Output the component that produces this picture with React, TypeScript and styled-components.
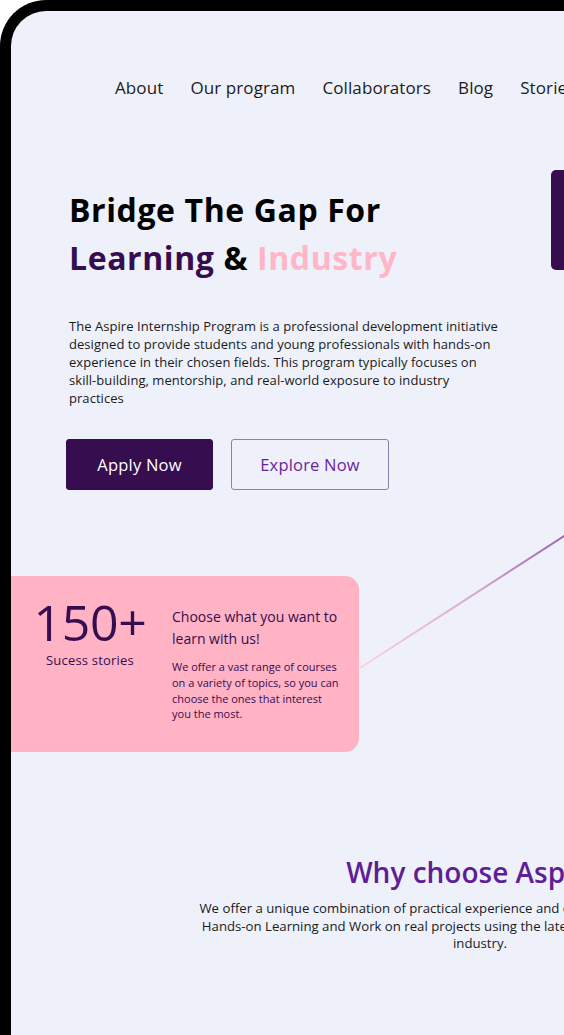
import React from "react";
import styled, { createGlobalStyle } from "styled-components";

const GlobalStyle = createGlobalStyle`
  html, body { margin: 0; padding: 0; background: #ffffff; overflow: hidden; }
  * { box-sizing: border-box; }
  body { font-family: "Open Sans", "Noto Sans", Arial, sans-serif; }
`;

const FONT = `"Open Sans", "Noto Sans", Arial, sans-serif`;
const DARK = "#360d4f";
const PURPLE = "#5f1e96";
const PINK = "#ffb3c4";

const Device = styled.div`
  width: 1000px;
  height: 1100px;
  border-top: 11px solid #000;
  border-left: 11px solid #000;
  border-top-left-radius: 46px;
  background: #eef1fa;
  overflow: hidden;
`;

const Page = styled.div`
  width: 938px;
  position: relative;
  font-family: ${FONT};
`;

const Nav = styled.nav`
  display: flex;
  gap: 27px;
  padding: 65px 0 0 104px;
`;

const NavLink = styled.a`
  font-size: 17px;
  line-height: 24px;
  letter-spacing: 0.1px;
  color: #1c1c1c;
  text-decoration: none;
  white-space: nowrap;
`;

const Hero = styled.section`
  position: relative;
  display: grid;
  grid-template-columns: 482px 1fr;
  padding: 70px 0 0 58px;
`;

const HeroText = styled.div`
  display: flex;
  flex-direction: column;
`;

const Title = styled.h1`
  margin: 16px 0 0;
  font-size: 32px;
  line-height: 48px;
  font-weight: 700;
  color: #000;
  letter-spacing: 0.6px;
  white-space: nowrap;
`;

const Accent = styled.span<{ $color: string }>`
  color: ${(p) => p.$color};
`;

const Lead = styled.p`
  margin: 35px 0 0;
  width: 470px;
  font-size: 13px;
  line-height: 18px;
  letter-spacing: 0.05px;
  color: #1a1a1a;
  white-space: nowrap;
`;

const Actions = styled.div`
  display: flex;
  gap: 18px;
  margin: 32px 0 0 -3px;
`;

const Button = styled.button<{ $primary?: boolean }>`
  height: 51px;
  padding: 0;
  width: ${(p) => (p.$primary ? "147px" : "158px")};
  border-radius: 3px;
  font-family: ${FONT};
  font-size: 16.5px;
  letter-spacing: 0.2px;
  cursor: pointer;
  background: ${(p) => (p.$primary ? DARK : "transparent")};
  color: ${(p) => (p.$primary ? "#fff" : "#6a1f9e")};
  border: 1px solid ${(p) => (p.$primary ? DARK : "#8d80a6")};
`;

const HeroImage = styled.div`
  width: 120px;
  height: 100px;
  border-radius: 5px;
  background: ${DARK};
`;

const Connector = styled.svg`
  position: absolute;
  left: 349px;
  top: 368px;
  overflow: visible;
`;

const StatCard = styled.div`
  position: relative;
  margin-top: 86px;
  width: 348px;
  height: 176px;
  background: ${PINK};
  border-radius: 0 14px 14px 0;
  display: grid;
  grid-template-columns: 139px 1fr;
  padding: 17px 0 0 18px;
`;

const StatBlock = styled.div`
  display: flex;
  flex-direction: column;
  align-items: center;
  color: ${DARK};
  width: 122px;
`;

const StatValue = styled.div`
  font-size: 50px;
  line-height: 58px;
  font-weight: 400;
  letter-spacing: -0.4px;
`;

const StatLabel = styled.div`
  font-size: 13px;
  line-height: 16px;
  letter-spacing: 0.2px;
  margin-top: 1px;
`;

const StatText = styled.div`
  color: ${DARK};
  padding: 13px 0 0 4px;
`;

const StatHeading = styled.div`
  font-size: 14px;
  line-height: 22px;
  font-weight: 500;
  white-space: nowrap;
`;

const StatBody = styled.div`
  margin-top: 9px;
  font-size: 11px;
  line-height: 15.8px;
  font-weight: 500;
  white-space: nowrap;
`;

const Why = styled.section`
  margin-top: 102px;
  display: flex;
  flex-direction: column;
  align-items: center;
  text-align: center;
`;

const WhyTitle = styled.h2`
  margin: 0;
  font-size: 28px;
  line-height: 36px;
  font-weight: 600;
  letter-spacing: 0;
  color: ${PURPLE};
`;

const WhyText = styled.p`
  margin: 10px 0 0;
  font-size: 13.2px;
  line-height: 17.5px;
  color: #1a1a1a;
  white-space: nowrap;
`;

export default function App() {
  return (
    <>
      <GlobalStyle />
      <Device>
        <Page>
          <Nav>
            {["About", "Our program", "Collaborators", "Blog", "Stories", "Contact"].map((l) => (
              <NavLink key={l} href="#">
                {l}
              </NavLink>
            ))}
          </Nav>

          <Hero>
            <HeroText>
              <Title>
                Bridge The Gap For
                <br />
                <Accent $color={DARK}>Learning</Accent> &amp; <Accent $color="#ffb6c6">Industry</Accent>
              </Title>
              <Lead>
                The Aspire Internship Program is a professional development initiative
                <br />
                designed to provide students and young professionals with hands-on
                <br />
                experience in their chosen fields. This program typically focuses on
                <br />
                skill-building, mentorship, and real-world exposure to industry
                <br />
                practices
              </Lead>
              <Actions>
                <Button $primary>Apply Now</Button>
                <Button>Explore Now</Button>
              </Actions>
            </HeroText>
            <div>
              <HeroImage />
            </div>
            <Connector width="300" height="200" viewBox="0 0 300 200">
              <defs>
                <linearGradient id="lineGrad" x1="0" y1="1" x2="1" y2="0">
                  <stop offset="0" stopColor="#fad3dc" />
                  <stop offset="0.4" stopColor="#d9a6cc" />
                  <stop offset="0.75" stopColor="#8c4db0" />
                  <stop offset="1" stopColor="#5f1e96" />
                </linearGradient>
              </defs>
              <line x1="0" y1="200" x2="300" y2="6" stroke="url(#lineGrad)" strokeWidth="2" />
            </Connector>
          </Hero>

          <StatCard>
            <StatBlock>
              <StatValue>150+</StatValue>
              <StatLabel>Sucess stories</StatLabel>
            </StatBlock>
            <StatText>
              <StatHeading>
                Choose what you want to
                <br />
                learn with us!
              </StatHeading>
              <StatBody>
                We offer a vast range of courses
                <br />
                on a variety of topics, so you can
                <br />
                choose the ones that interest
                <br />
                you the most.
              </StatBody>
            </StatText>
          </StatCard>

          <Why>
            <WhyTitle>Why choose Aspire?</WhyTitle>
            <WhyText>
              We offer a unique combination of practical experience and cutting-edge career mentorship.
              <br />
              Hands-on Learning and Work on real projects using the latest tools and technologies in the
              <br />
              industry.
            </WhyText>
          </Why>
        </Page>
      </Device>
    </>
  );
}
